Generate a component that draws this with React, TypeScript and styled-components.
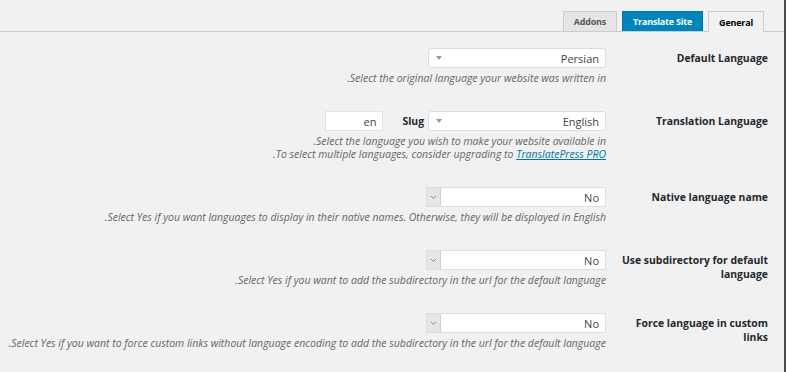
import styled, { createGlobalStyle } from "styled-components";

const Global = createGlobalStyle`
  html, body {
    margin: 0;
    padding: 0;
    background: #f1f1f1;
  }
`;

const Page = styled.div`
  direction: rtl;
  background: #f1f1f1;
  min-height: 372px;
  box-sizing: border-box;
  border-right: 2px solid #4a4a4a;
  font-family: "Open Sans", "Liberation Sans", sans-serif;
  color: #23282d;
`;

const TabBar = styled.div`
  display: flex;
  gap: 5px;
  padding: 11px 20px 0 0;
  border-bottom: 1px solid #ccc;
  height: 20px;
`;

const Tab = styled.div<{ $kind: "active" | "primary" | "plain" }>`
  box-sizing: border-box;
  padding: 0 10px;
  display: flex;
  align-items: center;
  font-size: 9px;
  letter-spacing: -0.2px;
  font-weight: 700;
  border: 1px solid ${(p) => (p.$kind === "primary" ? "#0073aa" : "#ccc")};
  border-bottom: none;
  background: ${(p) =>
    p.$kind === "primary" ? "#0085ba" : p.$kind === "active" ? "#f1f1f1" : "#e5e5e5"};
  color: ${(p) => (p.$kind === "primary" ? "#fff" : p.$kind === "active" ? "#000" : "#555")};
  margin-bottom: ${(p) => (p.$kind === "active" ? "-1px" : "0")};
  height: ${(p) => (p.$kind === "active" ? "21px" : "20px")};
`;

const Form = styled.div`
  padding-right: 16px;
`;

const Row = styled.div`
  display: grid;
  grid-template-columns: 150px 1fr;
  column-gap: 12px;
  padding: 16px 0 9px;
`;

const Label = styled.div`
  font-size: 10.4px;
  font-weight: 700;
  line-height: 14px;
  padding-top: 3px;
  color: #23282d;
`;

const Field = styled.div`
  display: flex;
  flex-direction: column;
`;

const Controls = styled.div`
  display: flex;
  align-items: center;
  height: 20px;
`;

const Select2 = styled.div`
  width: 178px;
  height: 20px;
  box-sizing: border-box;
  background: #fff;
  border: 1px solid #ddd;
  border-radius: 3px;
  display: flex;
  align-items: center;
  justify-content: space-between;
  padding: 0 6px 0 7px;
  font-size: 11px;
  color: #444;
`;

const Caret = styled.span`
  width: 0;
  height: 0;
  border-left: 3px solid transparent;
  border-right: 3px solid transparent;
  border-top: 4px solid #999;
`;

const NativeSelect = styled.div`
  width: 180px;
  height: 20px;
  box-sizing: border-box;
  background: #fff;
  border: 1px solid #ddd;
  display: flex;
  align-items: center;
  font-size: 11px;
  color: #444;
`;

const SelectValue = styled.span`
  flex: 1;
  padding-right: 6px;
`;

const ArrowBox = styled.span`
  width: 13px;
  height: 100%;
  background: #e6e6e6;
  border-right: 1px solid #cfcfcf;
  display: flex;
  align-items: center;
  justify-content: center;
`;

const SlugLabel = styled.span`
  font-size: 10.4px;
  font-weight: 700;
  margin: 0 4px 0 19px;
`;

const SlugInput = styled.div`
  width: 58px;
  height: 20px;
  box-sizing: border-box;
  background: #fff;
  border: 1px solid #e4e4e4;
  font-size: 11px;
  color: #444;
  display: flex;
  align-items: center;
  padding-right: 6px;
`;

const Desc = styled.p`
  margin: 2px 0 0;
  font-size: 10.5px;
  font-style: italic;
  line-height: 16px;
  color: #666;
  white-space: nowrap;
  & + & {
    margin-top: -3px;
  }
  a {
    color: #0073aa;
    text-decoration: underline;
  }
`;

const Chevron = () => (
  <svg width="7" height="5" viewBox="0 0 7 5">
    <path d="M1 1 L3.5 3.5 L6 1" fill="none" stroke="#888" strokeWidth="1" />
  </svg>
);

const YesNo = () => (
  <NativeSelect>
    <SelectValue>No</SelectValue>
    <ArrowBox>
      <Chevron />
    </ArrowBox>
  </NativeSelect>
);

export default function App() {
  return (
    <>
      <Global />
      <Page>
        <TabBar>
          <Tab $kind="active">General</Tab>
          <Tab $kind="primary">Translate Site</Tab>
          <Tab $kind="plain">Addons</Tab>
        </TabBar>
        <Form>
          <Row>
            <Label>Default Language</Label>
            <Field>
              <Controls>
                <Select2>
                  <span>Persian</span>
                  <Caret />
                </Select2>
              </Controls>
              <Desc>Select the original language your website was written in.</Desc>
            </Field>
          </Row>
          <Row>
            <Label>Translation Language</Label>
            <Field>
              <Controls>
                <Select2>
                  <span>English</span>
                  <Caret />
                </Select2>
                <SlugLabel>Slug</SlugLabel>
                <SlugInput>en</SlugInput>
              </Controls>
              <Desc>Select the language you wish to make your website available in.</Desc>
              <Desc>
                To select multiple languages, consider upgrading to <a href="#">TranslatePress PRO</a>.
              </Desc>
            </Field>
          </Row>
          <Row>
            <Label>Native language name</Label>
            <Field>
              <Controls>
                <YesNo />
              </Controls>
              <Desc>
                Select Yes if you want languages to display in their native names. Otherwise, they will be displayed in English.
              </Desc>
            </Field>
          </Row>
          <Row>
            <Label>Use subdirectory for default language</Label>
            <Field>
              <Controls>
                <YesNo />
              </Controls>
              <Desc>Select Yes if you want to add the subdirectory in the url for the default language.</Desc>
            </Field>
          </Row>
          <Row>
            <Label>Force language in custom links</Label>
            <Field>
              <Controls>
                <YesNo />
              </Controls>
              <Desc>
                Select Yes if you want to force custom links without language encoding to add the subdirectory in the url for the default language.
              </Desc>
            </Field>
          </Row>
        </Form>
      </Page>
    </>
  );
}
